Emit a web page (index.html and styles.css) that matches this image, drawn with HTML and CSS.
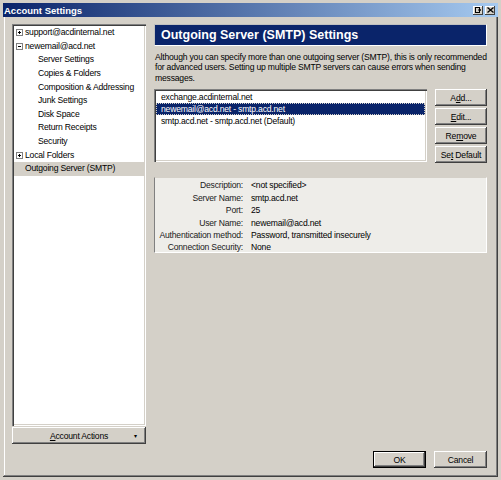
FILE: index.html
```html
<!DOCTYPE html>
<html lang="en">
<head>
  <meta charset="UTF-8" />
  <title>Account Settings</title>
  <link rel="stylesheet" href="styles.css">
</head>
<body>
  <div class="window">
    <div class="titlebar">
      <span class="title">Account Settings</span>
      <span class="tb-btn">
        <svg width="7" height="6" viewBox="0 0 7 6"><rect x="0.5" y="0.5" width="4" height="5" fill="none" stroke="#000"/><path d="M3 3h3M5 2v2" stroke="#000"/></svg>
      </span>
      <span class="tb-btn">
        <svg width="7" height="6" viewBox="0 0 7 6"><path d="M0.5 0.5l6 5M6.5 0.5l-6 5" stroke="#000" stroke-width="1.3"/></svg>
      </span>
    </div>

    <div class="main">
      <div class="left">
        <ul class="tree">
          <li class="node"><span class="twisty plus"></span>support@acdinternal.net</li>
          <li class="node"><span class="twisty"></span>newemail@acd.net</li>
          <li class="child">Server Settings</li>
          <li class="child">Copies &amp; Folders</li>
          <li class="child">Composition &amp; Addressing</li>
          <li class="child">Junk Settings</li>
          <li class="child">Disk Space</li>
          <li class="child">Return Receipts</li>
          <li class="child">Security</li>
          <li class="node"><span class="twisty plus"></span>Local Folders</li>
          <li class="node current">Outgoing Server (SMTP)</li>
        </ul>
        <button class="btn actions"><span><u>A</u>ccount Actions</span><span class="arrow">&#9662;</span></button>
      </div>

      <div class="right">
        <div class="header">Outgoing Server (SMTP) Settings</div>
        <p class="desc">Although you can specify more than one outgoing server (SMTP), this is only recommended for advanced users. Setting up multiple SMTP servers can cause errors when sending messages.</p>

        <div class="servers">
          <ul class="listbox">
            <li>exchange.acdinternal.net</li>
            <li class="selected">newemail@acd.net - smtp.acd.net</li>
            <li>smtp.acd.net - smtp.acd.net (Default)</li>
          </ul>
          <div class="side-btns">
            <button class="btn">A<u>d</u>d...</button>
            <button class="btn"><u>E</u>dit...</button>
            <button class="btn">Re<u>m</u>ove</button>
            <button class="btn">Se<u>t</u> Default</button>
          </div>
        </div>

        <div class="details">
          <span class="label">Description:</span><span>&lt;not specified&gt;</span>
          <span class="label">Server Name:</span><span>smtp.acd.net</span>
          <span class="label">Port:</span><span>25</span>
          <span class="label">User Name:</span><span>newemail@acd.net</span>
          <span class="label">Authentication method:</span><span>Password, transmitted insecurely</span>
          <span class="label">Connection Security:</span><span>None</span>
        </div>
      </div>
    </div>

    <div class="footer">
      <button class="btn default">OK</button>
      <button class="btn">Cancel</button>
    </div>
  </div>
</body>
</html>
```

FILE: styles.css
```css
* {
  box-sizing: border-box;
}

body {
  margin: 0;
  background: #d4d0c8;
  font-family: "Liberation Sans", Arial, sans-serif;
  font-size: 8.6px;
  letter-spacing: -0.2px;
  color: #000;
}

.window {
  width: 501px;
  height: 480px;
  display: flex;
  flex-direction: column;
  background: #d4d0c8;
  border: 3px solid #d4d0c8;
  box-shadow: inset -1px -1px #404040, inset 1px 1px #d4d0c8, inset -2px -2px #808080, inset 2px 2px #fff;
}

.titlebar {
  height: 14px;
  display: flex;
  align-items: center;
  gap: 2px;
  padding: 0 3px 0 1px;
  background: linear-gradient(to right, #0a246a, #a6caf0);
}

.title {
  flex: 1;
  color: #fff;
  font-weight: bold;
  font-size: 9.5px;
  letter-spacing: 0;
}

.tb-btn {
  width: 10px;
  height: 9px;
  display: flex;
  align-items: center;
  justify-content: center;
  background: #d4d0c8;
  box-shadow: inset -1px -1px #404040, inset 1px 1px #fff;
}

.main {
  flex: 1;
  display: flex;
  gap: 8px;
  padding: 7px 11px 0 9px;
}

.left {
  width: 134px;
  display: flex;
  flex-direction: column;
  gap: 1px;
}

.tree {
  flex: 1;
  list-style: none;
  margin: 0;
  padding: 2px 0 0 2px;
  background: #fff;
  box-shadow: inset 1px 1px #808080, inset 2px 2px #404040, inset -1px -1px #fff, inset -2px -2px #d4d0c8;
}

.tree li {
  height: 13.65px;
  line-height: 13.65px;
  white-space: nowrap;
  display: flex;
  align-items: center;
}

.node {
  padding-left: 11px;
}

.child {
  padding-left: 24px;
}

.twisty {
  width: 7px;
  height: 7px;
  margin: 0 2px 0 -9px;
  border: 1px solid #808080;
  background: #fff;
  position: relative;
}

.twisty::before,
.plus::after {
  content: "";
  position: absolute;
  background: #000;
}

.twisty::before {
  left: 1px;
  top: 2px;
  width: 3px;
  height: 1px;
}

.plus::after {
  left: 2px;
  top: 1px;
  width: 1px;
  height: 3px;
}

.tree .current {
  background: #d4d0c8;
  margin-right: 2px;
}

.btn {
  font-family: inherit;
  font-size: 8.6px;
  letter-spacing: -0.2px;
  color: #000;
  background: #d4d0c8;
  border: none;
  padding: 0;
  height: 17px;
  box-shadow: inset -1px -1px #404040, inset 1px 1px #fff, inset -2px -2px #808080, inset 2px 2px #d4d0c8;
}

.actions {
  display: flex;
  align-items: center;
  justify-content: center;
  position: relative;
}

.actions .arrow {
  position: absolute;
  right: 9px;
  font-size: 6px;
}

.right {
  flex: 1;
  display: flex;
  flex-direction: column;
}

.header {
  height: 22px;
  background: #0a246a;
  color: #fff;
  font-weight: bold;
  font-size: 12.5px;
  letter-spacing: 0;
  line-height: 20px;
  padding-left: 6px;
  border: 1px solid #c0c0c0;
  border-right-color: #fff;
  border-bottom-color: #fff;
}

.desc {
  margin: 6px 0 6px 1px;
  line-height: 10.4px;
}

.servers {
  display: flex;
  gap: 8px;
}

.listbox {
  flex: 1;
  height: 73px;
  list-style: none;
  margin: 0;
  padding: 2px;
  background: #fff;
  box-shadow: inset 1px 1px #808080, inset 2px 2px #404040, inset -1px -1px #fff, inset -2px -2px #d4d0c8;
}

.listbox li {
  height: 12px;
  line-height: 12px;
  padding-left: 5px;
}

.listbox .selected {
  background: #0a246a;
  color: #fff;
  outline: 1px dotted #d4d0c8;
  outline-offset: -1px;
}

.side-btns {
  width: 52px;
  display: flex;
  flex-direction: column;
  gap: 2px;
}

.details {
  margin-top: 14px;
  height: 76px;
  display: grid;
  grid-template-columns: 88px 1fr;
  column-gap: 8px;
  grid-auto-rows: 12.4px;
  align-items: center;
  padding-top: 1px;
  background: #eeede9;
  border-top: 1px solid #d4d0c8;
  border-left: 1px solid #808080;
  border-right: 1px solid #fff;
  border-bottom: 1px solid #fff;
}

.details .label {
  text-align: right;
  color: #202020;
  white-space: nowrap;
}

.footer {
  display: flex;
  justify-content: flex-end;
  gap: 8px;
  padding: 7px 11px 9px 0;
}

.footer .btn {
  width: 53px;
}

.footer .default {
  box-shadow: inset 0 0 0 1px #000, inset -2px -2px #404040, inset 2px 2px #fff, inset -3px -3px #808080;
}
```
